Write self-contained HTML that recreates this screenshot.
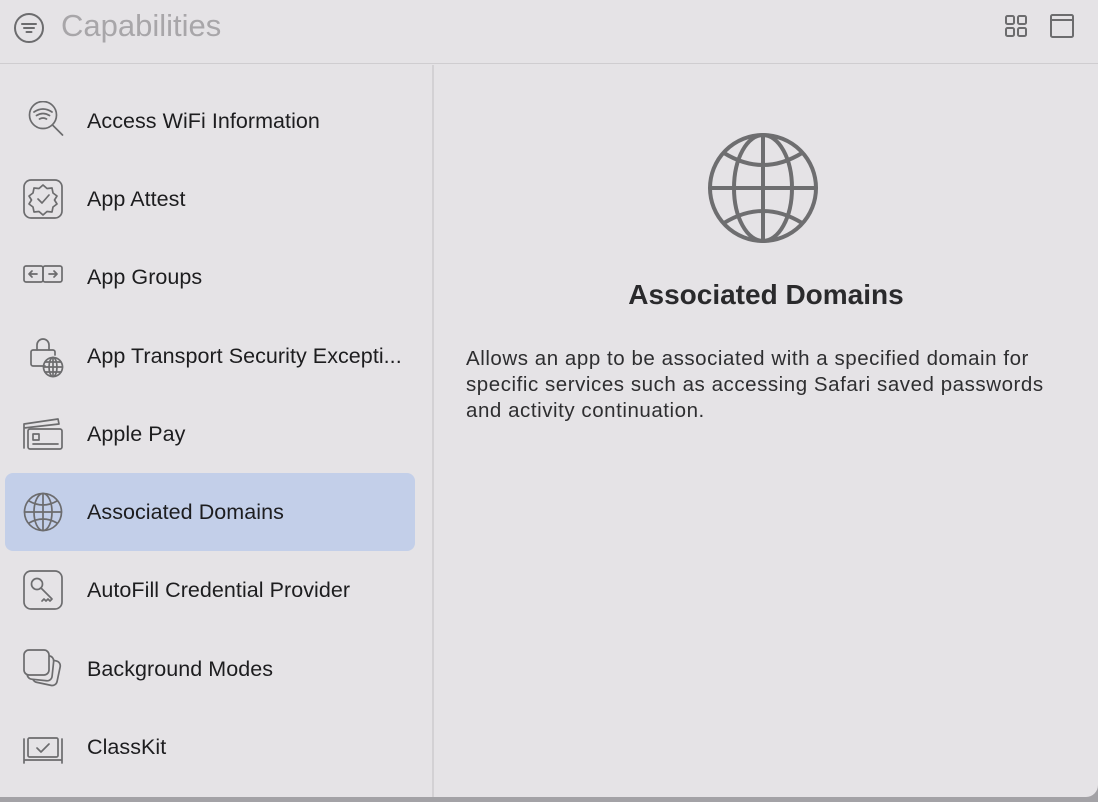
<!DOCTYPE html>
<html><head><meta charset="utf-8"><style>
*{margin:0;padding:0;box-sizing:border-box}
body{width:1098px;height:802px;background:#a3a2a6;font-family:"Liberation Sans",sans-serif;overflow:hidden;position:relative}
.win{position:absolute;left:0;top:0;width:1098px;height:797px;background:#e5e3e6;border-bottom-right-radius:12px;overflow:hidden}
.hdr{position:absolute;left:0;top:0;width:1098px;height:64px;border-bottom:1.5px solid #cfcdd0}
.title{position:absolute;left:61px;top:8px;font-size:31px;color:#a8a6a9}
.side{position:absolute;left:432px;top:65px;width:1.5px;height:732px;background:#d3d1d4}
.row{position:absolute;left:5px;width:410px;height:78px}
.row.sel{background:#c3cfe9;border-radius:8px}
.row svg{position:absolute;left:18px;top:19px}
.row span{position:absolute;left:82px;top:27px;font-size:21.5px;letter-spacing:0.05px;color:#1d1d1f;white-space:nowrap}
.desc{position:absolute;left:466px;top:346px;width:600px;font-size:20.5px;line-height:26px;color:#2e2e30;letter-spacing:0.55px}
h1{position:absolute;left:433px;width:666px;text-align:center;top:279px;font-size:28px;font-weight:bold;color:#2a2a2c}
svg{fill:none;stroke:#6c6c6e;stroke-width:1.7;stroke-linecap:round;stroke-linejoin:round}
.hdr svg{stroke-width:2}
.big{stroke-width:4;stroke:#6e6e70}
</style></head><body>
<div class="win">
<div class="hdr">
<svg style="position:absolute;left:13px;top:12px" width="32" height="32" viewBox="0 0 32 32"><circle cx="16" cy="16" r="14"/><path d="M9 12h14M11 16h10M13.5 20h5"/></svg>
<div class="title">Capabilities</div>
<svg style="position:absolute;left:1003px;top:13px" width="28" height="28" viewBox="0 0 28 28"><rect x="3" y="3" width="8" height="8" rx="1.5"/><rect x="15" y="3" width="8" height="8" rx="1.5"/><rect x="3" y="15" width="8" height="8" rx="1.5"/><rect x="15" y="15" width="8" height="8" rx="1.5"/></svg>
<svg style="position:absolute;left:1048px;top:12px" width="28" height="28" viewBox="0 0 28 28"><rect x="3" y="3" width="22" height="22" rx="1.5"/><path d="M3 8h22"/></svg>
</div>
<div class="side"></div>

<div class="row" style="top:82px"><svg width="42" height="42" viewBox="0 0 42 42"><circle cx="20" cy="14" r="13.5"/><path d="M29.5 24l10 10M11 11q9-6 18 0M13.5 14.5q6.5-4 13 0M16.5 18q3.5-2 7 0"/></svg><span>Access WiFi Information</span></div>
<div class="row" style="top:160px"><svg width="42" height="42" viewBox="0 0 42 42"><rect x="1" y="1" width="38" height="38" rx="7"/><path d="M20 6l4 3.5 5-.5 1 5 4 3-2.5 4 2.5 4-4 3-1 5-5-.5-4 3.5-4-3.5-5 .5-1-5-4-3 2.5-4-2.5-4 4-3 1-5 5 .5z"/><path d="M15 20l4 4 7-8"/></svg><span>App Attest</span></div>
<div class="row" style="top:238px"><svg width="42" height="42" viewBox="0 0 42 42"><rect x="1" y="9" width="19" height="16" rx="2"/><rect x="20" y="9" width="19" height="16" rx="2"/><path d="M6 17h8M6 17l3-3M6 17l3 3M26 17h8M34 17l-3-3M34 17l-3 3"/></svg><span>App Groups</span></div>
<div class="row" style="top:317px"><svg width="42" height="42" viewBox="0 0 42 42"><path d="M14 14v-5a6 6 0 0 1 12 0v5"/><path d="M22 30H10a2 2 0 0 1-2-2V16a2 2 0 0 1 2-2h20a2 2 0 0 1 2 2v3"/><circle cx="30" cy="31" r="9.5"/><ellipse cx="30" cy="31" rx="4" ry="9.5"/><path d="M20.5 31h19M30 21.5v19M22 26h16M22 36h16"/></svg><span>App Transport Security Excepti...</span></div>
<div class="row" style="top:395px"><svg width="42" height="42" viewBox="0 0 42 42"><path d="M1 10l34-5 1 5M1 10v24M1 14l35-4"/><rect x="5" y="15" width="34" height="20" rx="2"/><rect x="10" y="20" width="6" height="6"/><path d="M10 30h25"/></svg><span>Apple Pay</span></div>
<div class="row sel" style="top:473px"><svg width="42" height="42" viewBox="0 0 42 42"><circle cx="20" cy="20" r="18.5"/><ellipse cx="20" cy="20" rx="9" ry="18.5"/><path d="M20 1.5v37M1.5 20h37M6 9q14 8 28 0M6 31q14-8 28 0"/></svg><span>Associated Domains</span></div>
<div class="row" style="top:551px"><svg width="42" height="42" viewBox="0 0 42 42"><rect x="1" y="1" width="38" height="38" rx="7"/><circle cx="14" cy="14" r="5.5"/><path d="M18 18l11 11-2 2-2-2-2 2-2-2-2 2"/></svg><span>AutoFill Credential Provider</span></div>
<div class="row" style="top:630px"><svg width="42" height="42" viewBox="0 0 42 42"><rect x="11" y="10" width="25" height="25" rx="5" transform="rotate(12 23 22)"/><rect x="5" y="6" width="25" height="25" rx="5" transform="rotate(6 17 18)" fill="#e5e3e6"/><rect x="1" y="1" width="25" height="25" rx="5" fill="#e5e3e6"/></svg><span>Background Modes</span></div>
<div class="row" style="top:708px"><svg width="42" height="42" viewBox="0 0 42 42"><path d="M1 12v24M39 12v24M1 33h38"/><rect x="5" y="11" width="30" height="19" rx="1.5"/><path d="M14 21l4 4 8-8"/></svg><span>ClassKit</span></div>

<svg class="big" style="position:absolute;left:706px;top:131px" width="114" height="114" viewBox="0 0 114 114"><circle cx="57" cy="57" r="53"/><ellipse cx="57" cy="57" rx="29" ry="53"/><path d="M57 4v106M4 57h106M18 22q39 24 78 0M18 92q39-24 78 0"/></svg>
<h1>Associated Domains</h1>
<div class="desc">Allows an app to be associated with a specified domain for specific services such as accessing Safari saved passwords and activity continuation.</div>
</div>
</body></html>
